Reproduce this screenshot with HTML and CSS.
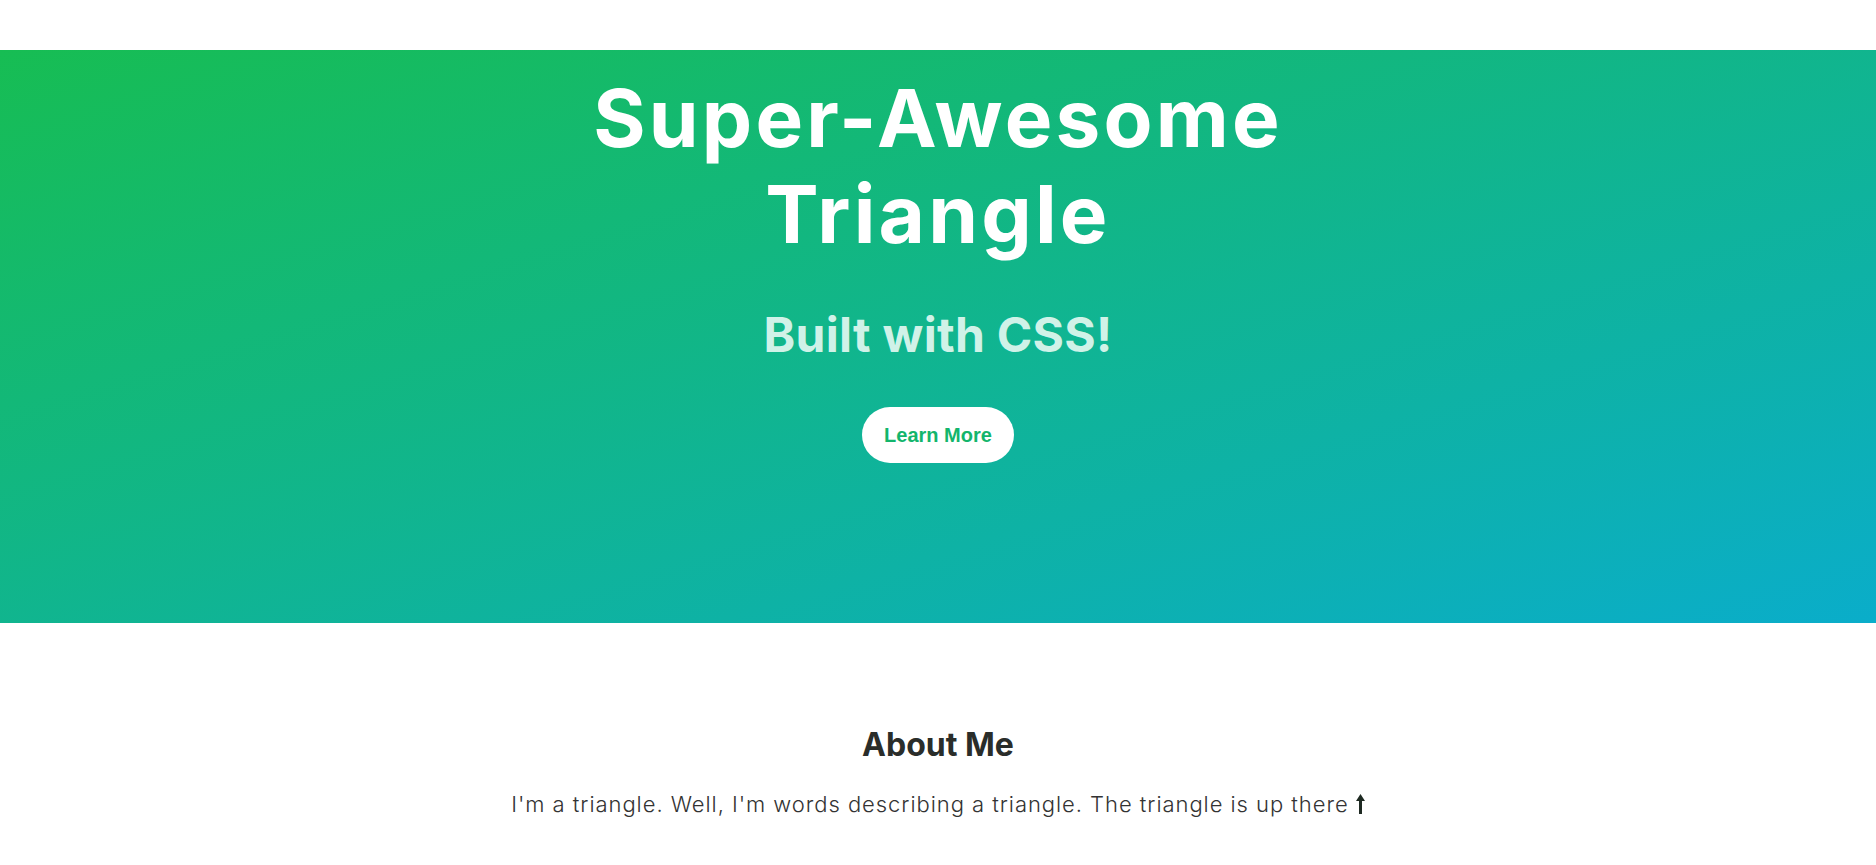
FILE: index.html
```html
<!DOCTYPE html>
<html lang="en">
<head>
<meta charset="utf-8">
<title>Super-Awesome Triangle</title>
<link rel="stylesheet" href="styles.css">
</head>
<body>
<header class="topbar"></header>
<section class="hero">
  <h1 class="hero-title">Super-Awesome Triangle</h1>
  <h2 class="hero-sub">Built with CSS!</h2>
  <a class="btn" href="#about">Learn More</a>
</section>
<section class="about" id="about">
  <h3 class="about-title">About Me</h3>
  <p class="about-text">I'm a triangle. Well, I'm words describing a triangle. The triangle is up there <svg class="arrow" width="9" height="20" viewBox="0 0 9 20" aria-hidden="true"><path d="M4.5 0 L9 7 L6 7 L6 20 L3 20 L3 7 L0 7 Z" fill="#1e2a22"/></svg></p>
</section>
</body>
</html>
```
FILE: styles.css
```css
html, body {
  margin: 0;
  padding: 0;
  background: #ffffff;
}
body {
  font-family: Inter, "Noto Sans", sans-serif;
}
.topbar {
  height: 50px;
  background: #ffffff;
}
.hero {
  height: 573px;
  box-sizing: border-box;
  padding-top: 20px;
  background: linear-gradient(to bottom right, #17bd53, #0aadca);
  text-align: center;
}
.hero-title {
  margin: 0 auto;
  max-width: 760px;
  font-size: 80px;
  line-height: 1.2;
  font-weight: 700;
  color: #ffffff;
  letter-spacing: 3.2px;
}
.hero-sub {
  margin: 44px 0 0;
  font-size: 48px;
  line-height: 1.2;
  font-weight: 700;
  color: #d0f2e8;
  letter-spacing: 0.3px;
}
.btn {
  display: inline-block;
  margin-top: 43px;
  padding: 16px 22px;
  border-radius: 28px;
  background: #ffffff;
  color: #13b56c;
  font-family: "Liberation Sans", Arial, sans-serif;
  font-weight: 700;
  font-size: 20px;
  line-height: 24px;
  text-decoration: none;
}
.about {
  padding-top: 103px;
  text-align: center;
}
.about-title {
  margin: 0;
  font-size: 32px;
  line-height: 1.2;
  font-weight: 700;
  color: #2a2d2a;
}
.about-text {
  margin: 24px 0 0;
  font-size: 22px;
  line-height: 1.5;
  font-weight: 300;
  color: #333333;
  letter-spacing: 0.95px;
}
.arrow {
  vertical-align: -2px;
}
```
